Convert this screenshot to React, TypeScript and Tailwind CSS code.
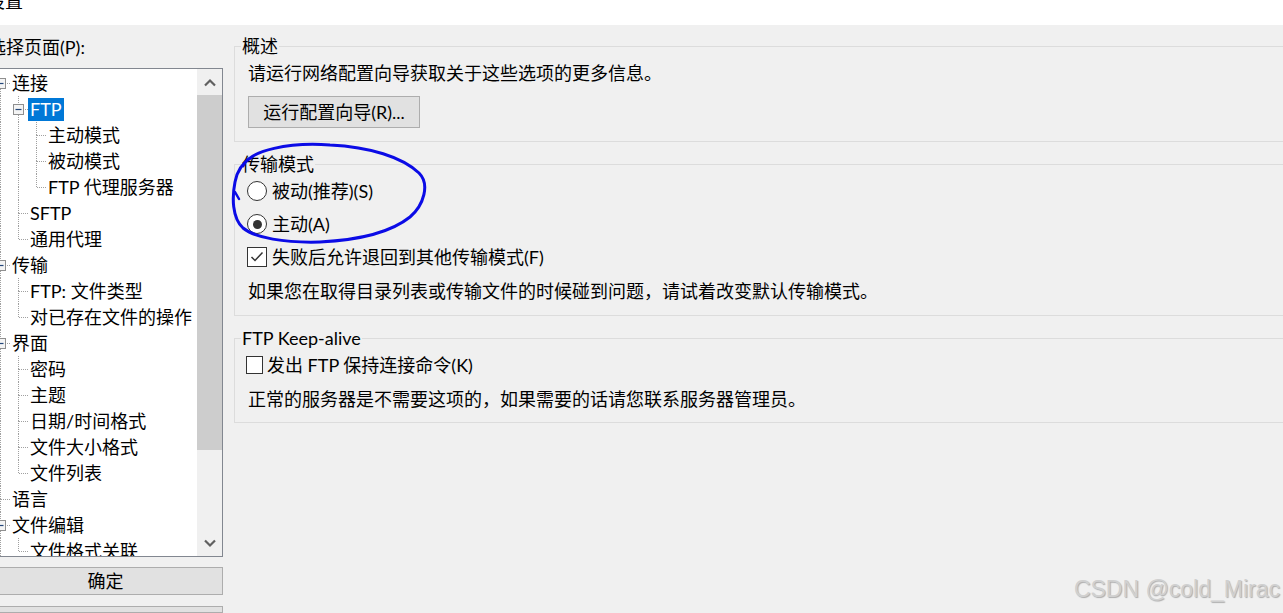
import React from "react";

type Item = { label: string; level: number; box?: boolean; selected?: boolean };

const items: Item[] = [
  { label: "连接", level: 0, box: true },
  { label: "FTP", level: 1, box: true, selected: true },
  { label: "主动模式", level: 2 },
  { label: "被动模式", level: 2 },
  { label: "FTP 代理服务器", level: 2 },
  { label: "SFTP", level: 1 },
  { label: "通用代理", level: 1 },
  { label: "传输", level: 0, box: true },
  { label: "FTP: 文件类型", level: 1 },
  { label: "对已存在文件的操作", level: 1 },
  { label: "界面", level: 0, box: true },
  { label: "密码", level: 1 },
  { label: "主题", level: 1 },
  { label: "日期/时间格式", level: 1 },
  { label: "文件大小格式", level: 1 },
  { label: "文件列表", level: 1 },
  { label: "语言", level: 0 },
  { label: "文件编辑", level: 0, box: true },
  { label: "文件格式关联", level: 1 },
];

function hasNext(i: number): boolean {
  const lv = items[i].level;
  for (let j = i + 1; j < items.length; j++) {
    if (items[j].level < lv) return false;
    if (items[j].level === lv) return true;
  }
  return lv === 0;
}

function ancestorContinues(i: number, a: number): boolean {
  for (let j = i - 1; j >= 0; j--) {
    if (items[j].level === a) return hasNext(j);
  }
  return false;
}

const LINE = "#a0a0a0";

function Cell({ top, bottom, horiz, box }: { top?: boolean; bottom?: boolean; horiz?: boolean; box?: boolean }) {
  return (
    <svg width="18" height="26" className="shrink-0 overflow-visible">
      {top && <line x1="9.5" y1="0" x2="9.5" y2="13" stroke={LINE} strokeDasharray="1 1" />}
      {bottom && <line x1="9.5" y1="13" x2="9.5" y2="26" stroke={LINE} strokeDasharray="1 1" />}
      {horiz && <line x1="10" y1="13.5" x2="20" y2="13.5" stroke={LINE} strokeDasharray="1 1" />}
      {box && (
        <>
          <rect x="4.5" y="8.5" width="10" height="10" fill="#f4f4f4" stroke="#8f8f8f" />
          <line x1="6.5" y1="13.5" x2="12.5" y2="13.5" stroke="#23467a" strokeWidth="1.2" />
        </>
      )}
    </svg>
  );
}

function Chevron({ up }: { up?: boolean }) {
  return (
    <svg width="12" height="9" viewBox="0 0 12 9">
      {up ? (
        <polyline points="1,7.5 6,2.5 11,7.5" fill="none" stroke="#606060" strokeWidth="2.2" />
      ) : (
        <polyline points="1,1.5 6,6.5 11,1.5" fill="none" stroke="#606060" strokeWidth="2.2" />
      )}
    </svg>
  );
}

function Tree() {
  return (
    <div className="flex-1 overflow-hidden pl-[2px] pt-[1px]">
      {items.map((it, i) => {
        const anc: React.ReactNode[] = [];
        for (let a = 0; a < it.level; a++) {
          anc.push(<Cell key={a} top={ancestorContinues(i, a)} bottom={ancestorContinues(i, a)} />);
        }
        return (
          <div key={i} className="flex h-[26px] items-center">
            {anc}
            <Cell top={i !== 0} bottom={hasNext(i)} horiz box={it.box} />
            <span
              className={
                "ml-[1px] whitespace-nowrap px-[2px] leading-[23px] " +
                (it.selected ? "bg-[#0078d7] text-white" : "text-black")
              }
            >
              {it.label}
            </span>
          </div>
        );
      })}
    </div>
  );
}

function Radio({ checked }: { checked?: boolean }) {
  return (
    <div className="ml-[-1px] flex h-[20px] w-[20px] shrink-0 items-center justify-center rounded-full border border-[#333333] bg-white">
      {checked && <div className="h-[9px] w-[9px] rounded-full bg-[#333333]" />}
    </div>
  );
}

export default function App() {
  return (
    <div className="relative h-[613px] w-[1283px] overflow-hidden font-['Lato','Noto_Sans_CJK_SC',sans-serif] text-[18px] text-black">
      <div className="h-[25px] overflow-hidden bg-white">
        <div className="ml-[-13px] mt-[-8px] leading-[18px]">设置</div>
      </div>
      <div className="flex h-[588px] overflow-hidden bg-[#f0f0f0]">
        {/* left column */}
        <div className="ml-[-12px] flex w-[235px] shrink-0 flex-col">
          <div className="mt-[9px] whitespace-nowrap leading-[26px]">选择页面(P):</div>
          <div className="mt-[8px] flex h-[489px] border border-[#828790] bg-white">
            <Tree />
            <div className="flex w-[25px] shrink-0 flex-col bg-[#f0f0f0]">
              <div className="flex h-[26px] items-center justify-center">
                <Chevron up />
              </div>
              <div className="h-[355px] bg-[#cdcdcd]" />
              <div className="flex-1" />
              <div className="flex h-[26px] items-center justify-center">
                <Chevron />
              </div>
            </div>
          </div>
          <div className="mt-[10px] flex h-[32px] items-center justify-center border border-[#adadad] bg-[#e1e1e1] leading-[26px]">
            确定
          </div>
          <div className="mt-[11px] h-[32px] border border-[#adadad] bg-[#e1e1e1]" />
        </div>

        {/* right column */}
        <div className="ml-[11px] mr-[-20px] flex flex-1 flex-col">
          <fieldset className="mt-[11px] border border-[#dcdcdc] pb-[13px] pl-[13px] pt-0">
            <legend className="ml-[-7px] px-[1px] leading-[20px]">概述</legend>
            <p className="mt-[4px] whitespace-nowrap leading-[26px]">请运行网络配置向导获取关于这些选项的更多信息。</p>
            <div className="mt-[10px] flex h-[32px] w-[172px] items-center justify-center whitespace-nowrap border border-[#adadad] bg-[#e1e1e1]">
              运行配置向导(R)...
            </div>
          </fieldset>

          <fieldset className="mt-[12px] border border-[#dcdcdc] pb-[11px] pl-[13px] pt-0">
            <legend className="ml-[-7px] px-[1px] leading-[20px]">传输模式</legend>
            <div className="mt-[4px] flex h-[26px] items-center gap-[5px]">
              <Radio />
              <span className="whitespace-nowrap">被动(推荐)(S)</span>
            </div>
            <div className="mt-[7px] flex h-[26px] items-center gap-[5px]">
              <Radio checked />
              <span className="whitespace-nowrap">主动(A)</span>
            </div>
            <div className="mt-[7px] flex h-[26px] items-center gap-[5px]">
              <div className="ml-[-1px] flex h-[20px] w-[20px] shrink-0 items-center justify-center border border-[#333333] bg-white">
                <svg width="14" height="12" viewBox="0 0 14 12">
                  <polyline points="1.5,6 5,9.5 12.5,1.5" fill="none" stroke="#333333" strokeWidth="1.5" />
                </svg>
              </div>
              <span className="whitespace-nowrap">失败后允许退回到其他传输模式(F)</span>
            </div>
            <p className="mt-[8px] whitespace-nowrap leading-[26px]">
              如果您在取得目录列表或传输文件的时候碰到问题，请试着改变默认传输模式。
            </p>
          </fieldset>

          <fieldset className="mt-[12px] border border-[#dcdcdc] pb-[10px] pl-[13px] pt-0">
            <legend className="ml-[-7px] px-[1px] leading-[20px]">FTP Keep-alive</legend>
            <div className="mt-[4px] flex h-[26px] items-center gap-[4px]">
              <div className="ml-[-2px] h-[18px] w-[17px] shrink-0 border border-[#333333] bg-white" />
              <span className="whitespace-nowrap">发出 FTP 保持连接命令(K)</span>
            </div>
            <p className="mt-[8px] whitespace-nowrap leading-[26px]">
              正常的服务器是不需要这项的，如果需要的话请您联系服务器管理员。
            </p>
          </fieldset>
        </div>
      </div>

      {/* hand-drawn annotation */}
      <svg
        className="pointer-events-none absolute left-0 top-0"
        width="1283"
        height="613"
        viewBox="0 0 1283 613"
      >
        <path
          d="M 243 166 C 250 150, 290 142, 330 145 C 370 147, 402 157, 419 173 C 430 184, 424 205, 410 217 C 390 233, 360 240, 320 242 C 285 243, 255 238, 243 228 C 232 218, 232 197, 235 182 C 237 171, 242 163, 252 157"
          fill="none"
          stroke="#0b0be6"
          strokeWidth="3"
          strokeLinecap="round"
        />
        <path d="M 235 192 L 239 199" fill="none" stroke="#0b0be6" strokeWidth="2.5" strokeLinecap="round" />
      </svg>

      {/* watermark */}
      <div className="absolute right-[3px] top-[578px] whitespace-nowrap font-['Liberation_Sans',sans-serif] text-[23px] leading-none text-[#d0d0d0] [text-shadow:1px_1px_1px_rgba(0,0,0,0.28)]">
        CSDN @cold_Mirac
      </div>
    </div>
  );
}
